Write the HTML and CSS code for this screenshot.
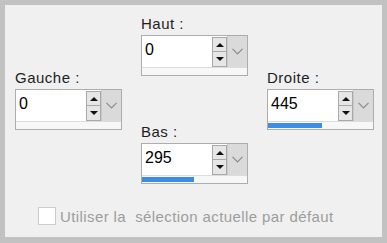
FILE: index.html
```html
<!DOCTYPE html>
<html lang="fr">
<head>
    <meta charset="UTF-8">
    <title>Marges</title>
    <link rel="stylesheet" href="styles.css">
</head>
<body>
    <div class="panel">
        <div class="fields">
            <div class="column">
                <div class="field">
                    <label class="field-label">Gauche :</label>
                    <div class="spin">
                        <div class="spin-main">
                            <div class="spin-value">0</div>
                            <div class="spin-btns">
                                <div class="spin-btn"><span class="tri-up"></span></div>
                                <div class="spin-btn"><span class="tri-down"></span></div>
                            </div>
                            <div class="spin-drop">
                                <svg width="11" height="7" viewBox="0 0 11 7"><path d="M0.5 0.8 L5.5 5.8 L10.5 0.8" fill="none" stroke="#8c8c8c" stroke-width="1.2"/></svg>
                            </div>
                        </div>
                        <div class="spin-bar"></div>
                    </div>
                </div>
            </div>
            <div class="column middle">
                <div class="field">
                    <label class="field-label">Haut :</label>
                    <div class="spin">
                        <div class="spin-main">
                            <div class="spin-value">0</div>
                            <div class="spin-btns">
                                <div class="spin-btn"><span class="tri-up"></span></div>
                                <div class="spin-btn"><span class="tri-down"></span></div>
                            </div>
                            <div class="spin-drop">
                                <svg width="11" height="7" viewBox="0 0 11 7"><path d="M0.5 0.8 L5.5 5.8 L10.5 0.8" fill="none" stroke="#8c8c8c" stroke-width="1.2"/></svg>
                            </div>
                        </div>
                        <div class="spin-bar"></div>
                    </div>
                </div>
                <div class="field">
                    <label class="field-label">Bas :</label>
                    <div class="spin">
                        <div class="spin-main">
                            <div class="spin-value">295</div>
                            <div class="spin-btns">
                                <div class="spin-btn"><span class="tri-up"></span></div>
                                <div class="spin-btn"><span class="tri-down"></span></div>
                            </div>
                            <div class="spin-drop">
                                <svg width="11" height="7" viewBox="0 0 11 7"><path d="M0.5 0.8 L5.5 5.8 L10.5 0.8" fill="none" stroke="#8c8c8c" stroke-width="1.2"/></svg>
                            </div>
                        </div>
                        <div class="spin-bar"><div class="spin-fill" style="width: 52px"></div></div>
                    </div>
                </div>
            </div>
            <div class="column">
                <div class="field">
                    <label class="field-label">Droite :</label>
                    <div class="spin">
                        <div class="spin-main">
                            <div class="spin-value">445</div>
                            <div class="spin-btns">
                                <div class="spin-btn"><span class="tri-up"></span></div>
                                <div class="spin-btn"><span class="tri-down"></span></div>
                            </div>
                            <div class="spin-drop">
                                <svg width="11" height="7" viewBox="0 0 11 7"><path d="M0.5 0.8 L5.5 5.8 L10.5 0.8" fill="none" stroke="#8c8c8c" stroke-width="1.2"/></svg>
                            </div>
                        </div>
                        <div class="spin-bar"><div class="spin-fill" style="width: 54px"></div></div>
                    </div>
                </div>
            </div>
        </div>
        <div class="option">
            <span class="checkbox"></span>
            <span class="option-text">Utiliser la &nbsp;sélection actuelle par défaut</span>
        </div>
    </div>
</body>
</html>
```

FILE: styles.css
```css
body {
    margin: 0;
    padding: 5px 5px 6px 5px;
    background-color: #c2c2c2;
    font-family: "Liberation Sans", Arial, sans-serif;
    font-size: 15px;
    height: 243px;
    box-sizing: border-box;
    overflow: hidden;
}
.panel {
    background-color: #f0f0f0;
    height: 100%;
    box-sizing: border-box;
    padding: 10px 0 0 10px;
    display: flex;
    flex-direction: column;
}
.fields {
    display: flex;
    align-items: center;
    gap: 19px;
}
.column {
    display: flex;
    flex-direction: column;
}
.middle {
    gap: 47px;
}
.field-label {
    display: block;
    line-height: 17px;
    color: #1e1e1e;
    margin-bottom: 3px;
    letter-spacing: 0.5px;
}
.spin {
    width: 107px;
    height: 41px;
    box-sizing: border-box;
    border: 1px solid #adadad;
    background: #fff;
    display: flex;
    flex-direction: column;
}
.spin-main {
    display: flex;
    height: 31px;
    border-bottom: 1px solid #dcdcdc;
}
.spin-value {
    flex: 1;
    padding: 6px 0 0 3px;
    font-size: 16px;
    line-height: 16px;
    color: #000;
}
.spin-btns {
    width: 15px;
    display: flex;
    flex-direction: column;
    padding-top: 1px;
}
.spin-btn {
    height: 15px;
    box-sizing: border-box;
    border: 1px solid #a9a9a9;
    background: #e6e6e6;
    display: flex;
    align-items: center;
    justify-content: center;
}
.spin-btn + .spin-btn {
    border-top: none;
}
.tri-up, .tri-down {
    width: 0;
    height: 0;
    border-left: 4px solid transparent;
    border-right: 4px solid transparent;
}
.tri-up {
    border-bottom: 4px solid #111;
}
.tri-down {
    border-top: 4px solid #111;
}
.spin-drop {
    width: 19px;
    background: #dadada;
    border-left: 1px solid #cacaca;
    display: flex;
    align-items: center;
    justify-content: center;
}
.spin-bar {
    flex: 1;
    background: #f7f7f7;
    padding: 1px 0 1px 0;
}
.spin-fill {
    height: 100%;
    background: #3c8ee4;
}
.option {
    display: flex;
    align-items: center;
    margin-top: 23px;
    padding-left: 23px;
}
.checkbox {
    width: 18px;
    height: 18px;
    box-sizing: border-box;
    border: 1px solid #cccccc;
    background: #fff;
    margin-right: 4px;
}
.option-text {
    color: #9d9d9d;
    letter-spacing: 0.4px;
}
```
